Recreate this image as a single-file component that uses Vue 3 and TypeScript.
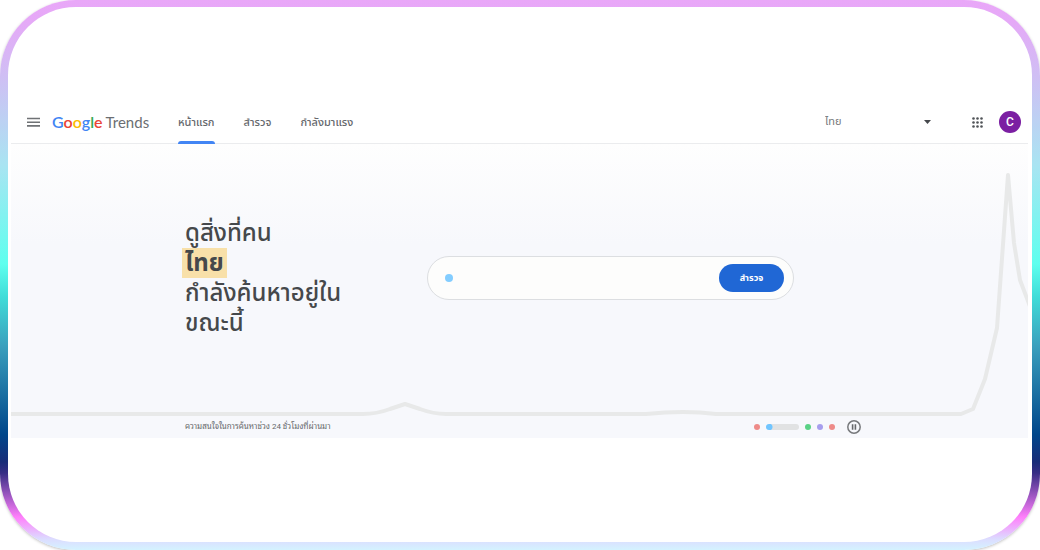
<script setup lang="ts">
import { ref } from 'vue'

interface NavItem {
  label: string
  active: boolean
}

interface Slide {
  id: number
  tone: string
  current: boolean
}

const navItems: NavItem[] = [
  { label: 'หน้าแรก', active: true },
  { label: 'สำรวจ', active: false },
  { label: 'กำลังมาแรง', active: false },
]

const slides: Slide[] = [
  { id: 1, tone: 'red', current: false },
  { id: 2, tone: 'blue', current: true },
  { id: 3, tone: 'green', current: false },
  { id: 4, tone: 'violet', current: false },
  { id: 5, tone: 'red', current: false },
]

const country = ref('ไทย')
const query = ref('')
</script>

<template>
  <div class="frame">
    <div class="card">
      <header class="bar">
        <button class="icon-button menu" type="button" aria-label="เมนู">
          <svg width="13" height="10" viewBox="0 0 13 10" aria-hidden="true">
            <path d="M0 1.5h13M0 5.2h13M0 8.9h13" stroke="#6f7275" stroke-width="1.6" />
          </svg>
        </button>
        <a class="logo" href="#" aria-label="Google Trends">
          <span class="google"><span class="b">G</span><span class="r">o</span><span class="y">o</span><span class="b">g</span><span class="g">l</span><span class="r">e</span></span>
          <span class="trends">Trends</span>
        </a>
        <nav class="nav">
          <a v-for="item in navItems" :key="item.label" href="#" class="nav-link" :class="{ active: item.active }">{{ item.label }}</a>
        </nav>
        <div class="country">
          <select v-model="country" aria-label="ประเทศ">
            <option>ไทย</option>
          </select>
          <svg class="caret" width="7" height="4" viewBox="0 0 7 4" aria-hidden="true">
            <path d="M0 0h7L3.5 4z" fill="#45484c" />
          </svg>
        </div>
        <button class="icon-button apps" type="button" aria-label="แอป">
          <svg width="11" height="11" viewBox="0 0 11 11" fill="#505357" aria-hidden="true">
            <template v-for="row in 3" :key="row">
              <circle v-for="col in 3" :key="col" :cx="col * 4 - 2.5" :cy="row * 4 - 2.5" r="1.3" />
            </template>
          </svg>
        </button>
        <button class="avatar" type="button" aria-label="บัญชี">C</button>
      </header>

      <main class="hero">
        <svg class="chart" viewBox="0 0 1017 294" preserveAspectRatio="none" aria-hidden="true">
          <path
            d="M-4 270H352C363 270 371 268 379 265L394 260L409 265C417 268 424 270 435 270H635Q674 266 705 270H950L962 265L974 235L986 184L997 31L1003 99L1009 136L1020 165"
            fill="none" stroke="#e8e9e9" stroke-width="4" stroke-linecap="round" stroke-linejoin="round"
          />
        </svg>
        <div class="main-row">
          <h1 class="title">
            ดูสิ่งที่คน<br /><mark>ไทย</mark><br />กำลังค้นหาอยู่ใน<br />ขณะนี้
          </h1>
          <form class="search" @submit.prevent>
            <span class="search-dot"></span>
            <input v-model="query" type="text" aria-label="ข้อความค้นหา" />
            <button class="explore" type="submit">สำรวจ</button>
          </form>
        </div>
        <div class="foot-row">
          <p class="note">ความสนใจในการค้นหาช่วง 24 ชั่วโมงที่ผ่านมา</p>
          <div class="slides">
            <button
              v-for="slide in slides" :key="slide.id" type="button"
              class="slide" :class="[slide.tone, { current: slide.current }]" :aria-label="`สไลด์ ${slide.id}`"
            ></button>
          </div>
          <button class="icon-button pause" type="button" aria-label="หยุดชั่วคราว">
            <svg width="14" height="14" viewBox="0 0 14 14" aria-hidden="true">
              <circle cx="7" cy="7" r="6.2" fill="none" stroke="#77797c" stroke-width="1.5" />
              <path d="M5.6 4.2v5.6M8.4 4.2v5.6" stroke="#66686b" stroke-width="1.6" />
            </svg>
          </button>
        </div>
      </main>
    </div>
  </div>
</template>

<style>
body {
  margin: 0;
  background: #fff;
}
</style>

<style scoped>
.frame {
  box-sizing: border-box;
  min-height: 100vh;
  padding: 7px 8px 8px;
  display: flex;
  border-radius: 76px;
  background: linear-gradient(
    to bottom,
    #e9a7f8 0%,
    #e5a9f7 4%,
    #cfbff4 14%,
    #a9e4f2 30%,
    #5effee 48%,
    #3fdcd8 54%,
    #3a9fbd 63%,
    #00468a 79%,
    #182c78 84%,
    #372d85 86%,
    #ff7ffb 94%,
    #dcdcff 98%,
    #d4f3ff 100%
  );
  box-shadow: 0 1px 3px rgba(0, 0, 0, 0.25);
  font-family: Roboto, "Noto Sans Thai", "Noto Sans", sans-serif;
}

.card {
  flex: 1;
  min-width: 0;
  box-sizing: border-box;
  padding: 94px 4px 104px 3px;
  display: flex;
  flex-direction: column;
  border-radius: 68px;
  background: #fff;
}

button,
select,
input {
  font-family: inherit;
  padding: 0;
  border: 0;
  background: none;
}

.bar {
  height: 42px;
  display: flex;
  align-items: center;
  border-bottom: 1px solid #ebecee;
  padding: 0 7px 0 16px;
}

.icon-button {
  display: flex;
  align-items: center;
  justify-content: center;
}

.logo {
  display: flex;
  align-items: baseline;
  gap: 3px;
  margin-left: 12px;
  width: 126px;
  font: 16px/24px Lato, sans-serif;
  text-decoration: none;
}

.b { color: #4285f4; }
.r { color: #ea4335; }
.y { color: #fbbc04; }
.g { color: #34a853; }

.google {
  font-weight: 600;
}

.trends {
  font-size: 15px;
  color: #6b6e72;
}

.nav {
  align-self: stretch;
  display: flex;
  gap: 29px;
}

.nav-link {
  display: flex;
  align-items: center;
  font-size: 11px;
  font-weight: 500;
  color: #65686c;
  text-decoration: none;
  white-space: nowrap;
}

.nav-link.active {
  position: relative;
}

.nav-link.active::after {
  content: "";
  position: absolute;
  left: 0;
  right: 0;
  bottom: -1px;
  height: 3px;
  border-radius: 3px 3px 0 0;
  background: #4285f4;
}

.country {
  flex: 0 0 107px;
  margin-left: auto;
  display: flex;
  align-items: center;
}

.country select {
  flex: 1;
  appearance: none;
  font-size: 11px;
  line-height: 20px;
  color: #77797c;
}

.caret {
  margin-right: 1px;
  pointer-events: none;
}

.apps {
  margin-left: 40px;
}

.avatar {
  width: 22px;
  height: 22px;
  margin-left: 16px;
  border-radius: 50%;
  background: #7b1fa2;
  color: #fff;
  font: 500 12px/22px Roboto, sans-serif;
  text-align: center;
}

.hero {
  position: relative;
  flex: 1;
  display: flex;
  flex-direction: column;
  background: linear-gradient(to bottom, #fefefe 0, #f7f8fc 100px);
}

.chart {
  position: absolute;
  inset: 0;
  width: 100%;
  height: 100%;
}

.main-row {
  position: relative;
  flex: 1;
  display: grid;
  grid-template-columns: 242px 1fr;
  align-items: center;
  padding: 0 234px 4px 174px;
}

.title {
  margin: 0;
  font-size: 24px;
  font-weight: 500;
  line-height: 30px;
  color: #45484b;
  white-space: nowrap;
}

.title mark {
  display: inline-block;
  margin-left: -3px;
  padding: 0 3px;
  background: #f8e0a9;
  color: inherit;
  font-weight: 700;
}

.search {
  box-sizing: border-box;
  height: 44px;
  display: flex;
  align-items: center;
  padding: 0 9px 0 17px;
  border: 1px solid #dcdee1;
  border-radius: 22px;
  background: #fdfdfc;
}

.search-dot {
  width: 8px;
  height: 8px;
  border-radius: 50%;
  background: #83cdff;
}

.search input {
  flex: 1;
  min-width: 0;
  margin: 0 8px;
  font-size: 14px;
  outline: none;
}

.explore {
  width: 65px;
  height: 28px;
  border-radius: 14px;
  background: #2067d5;
  color: #fff;
  font-size: 9px;
  font-weight: 700;
}

.foot-row {
  position: relative;
  height: 22px;
  display: flex;
  align-items: center;
  padding: 0 167px 0 174px;
}

.note {
  flex: 1;
  margin: 0;
  font-family: Roboto, "Noto Sans Thai Looped", "Noto Sans Thai", sans-serif;
  font-size: 8px;
  line-height: 12px;
  color: #66686b;
}

.slides {
  display: flex;
  gap: 6px;
}

.slide {
  width: 6px;
  height: 6px;
  border-radius: 3px;
}

.slide.red { background: #ee8b89; }
.slide.green { background: #5ad286; }
.slide.violet { background: #a79eee; }

.slide.current {
  width: 33px;
  background: radial-gradient(circle at 3px 3px, #71c5ff 3px, #e1e2e3 4px);
}

.pause {
  margin-left: 12px;
}
</style>
